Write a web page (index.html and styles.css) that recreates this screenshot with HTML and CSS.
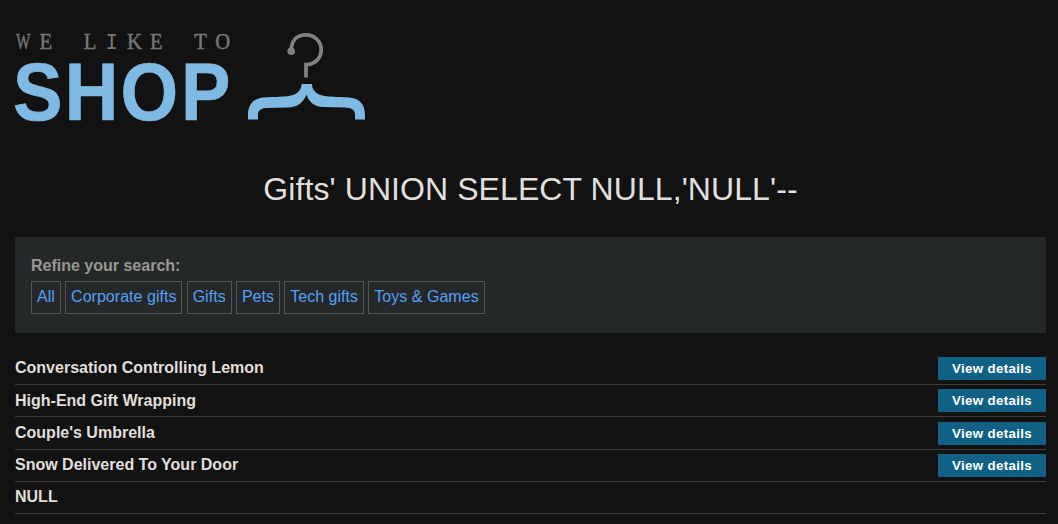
FILE: index.html
```html
<!DOCTYPE html>
<html lang="en">
<head>
<meta charset="utf-8">
<title>We like to shop</title>
<link rel="stylesheet" href="styles.css">
</head>
<body>
<main class="page">
  <header class="logo">
    <svg class="logo-art" viewBox="0 0 352 90" width="352" height="90" role="img">
      <g class="logo-tag">
        <text transform="translate(8.3 16.5) scale(.68 1)">W</text>
        <text transform="translate(0 16.5) scale(.92 1)" x="33.5 81.600 105.200 130 153.500 201.700 225.700">EL<tspan class="wide-i">I</tspan>KETO</text>
      </g>
      <text class="logo-name" transform="translate(0 88) scale(.915 1)" x="-2.2 54.3 115.300 181.300">SHOP</text>
      <path class="hook" d="M276.200 19C276.200 9 281.500 2.900 290.800 2.900C299.800 2.900 306.200 9.500 306.200 17.800C306.200 26.500 299.800 32.600 291 32.600V45.500"/>
      <circle class="hook-tip" cx="276.200" cy="19.300" r="3.800"/>
      <path class="bar" d="M233 87.500V83C233 71 240 66 249 65.500C262 64.500 279 65.500 283 60C286 57 286.500 55 286.500 52H297C297 55 297.500 57 300.500 60C305 65.500 321 64.500 334 65.500C343 66 350 71 350 83V87.500H340V83C340 77.500 337 76 330 75.500L308 75C299 74.500 294 70 291.500 62.500C288.500 70 283 75 274 75.500L251 76C245 76.500 243 79 243 83V87.500Z"/>
    </svg>
  </header>
  <h1 class="title">Gifts' UNION SELECT NULL,'NULL'--</h1>
  <section class="filters">
    <div class="filters-label">Refine your search:</div>
    <nav class="filters-list">
      <a class="chip">All</a>
      <a class="chip">Corporate gifts</a>
      <a class="chip">Gifts</a>
      <a class="chip">Pets</a>
      <a class="chip">Tech gifts</a>
      <a class="chip">Toys &amp; Games</a>
    </nav>
  </section>
  <section class="products">
    <div class="row"><span>Conversation Controlling Lemon</span><a class="button">View details</a></div>
    <div class="row"><span>High-End Gift Wrapping</span><a class="button">View details</a></div>
    <div class="row"><span>Couple's Umbrella</span><a class="button">View details</a></div>
    <div class="row"><span>Snow Delivered To Your Door</span><a class="button">View details</a></div>
    <div class="row"><span>NULL</span></div>
  </section>
</main>
</body>
</html>
```
FILE: styles.css
```css
* { box-sizing: border-box; }
body {
  margin: 0;
  background: #121212;
  color: #e1dfdc;
  font: 16px/18px "Liberation Sans", Arial, sans-serif;
  overflow: hidden;
}
.page { padding: 32px 12px 0 15px; }
.logo { height: 90px; }
.logo-art { display: block; overflow: visible; }
.logo-tag text {
  font: 22.5px "Liberation Serif", serif;
  text-anchor: middle;
  fill: #777;
  stroke: #777;
  stroke-width: .45;
}
.logo-tag .wide-i { font-family: "Liberation Mono", monospace; stroke: none; }
.logo-name {
  font: bold 81px "Liberation Sans", Arial, sans-serif;
  fill: #7ebae3;
  stroke: #7ebae3;
  stroke-width: .7;
}
.hook { fill: none; stroke: #808183; stroke-width: 3.8; }
.hook-tip { fill: #808183; }
.bar { fill: #7ebae3; }
.title {
  margin: 48px 0 0;
  height: 67px;
  font-size: 32px;
  line-height: 38px;
  font-weight: normal;
  letter-spacing: .08px;
  text-align: center;
}
.filters {
  height: 96px;
  padding: 20px 16px 0;
  background: #252829;
  color: #999792;
}
.filters-label { font-weight: bold; height: 24px; }
.filters-list { display: flex; gap: 4.2px; }
.chip {
  height: 33px;
  padding: 6px 5px 0;
  border: 1px solid #555657;
  color: #55a0f5;
  letter-spacing: .03px;
  white-space: nowrap;
}
.products { padding-top: 19.7px; }
.row {
  display: flex;
  justify-content: space-between;
  align-items: center;
  height: 32.3px;
  padding-top: .2px;
  border-bottom: 1px solid #3c3d3e;
  font-weight: bold;
}
.row span { margin-top: -.4px; }
.button {
  width: 108px;
  height: 23px;
  background: #116186;
  color: #fff;
  font: bold 13.33px/23px "Liberation Sans", Arial, sans-serif;
  letter-spacing: .33px;
  text-align: center;
}
```
